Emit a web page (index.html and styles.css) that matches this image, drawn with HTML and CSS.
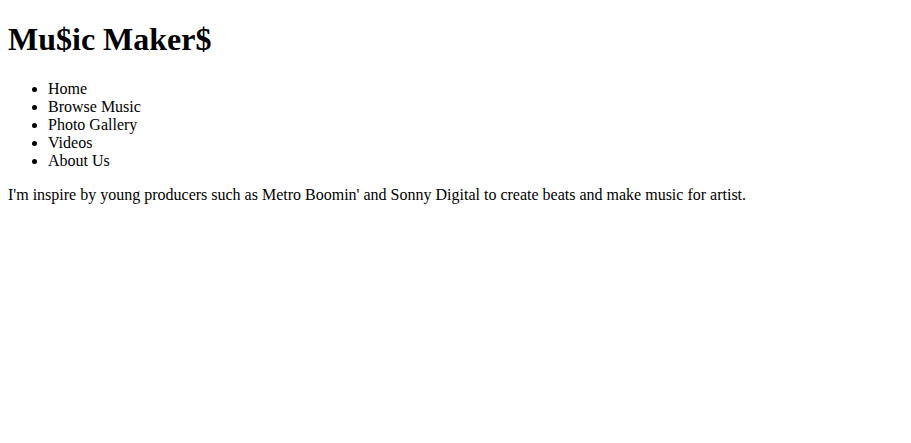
FILE: index.html
```html
<!DOCTYPE html>
<html>
<head>
<meta charset="utf-8">
<title>Mu$ic Maker$</title>
<link rel="stylesheet" href="styles.css">
</head>
<body class="page">
<h1 class="title">Mu$ic Maker$</h1>
<ul class="nav">
<li>Home</li>
<li>Browse Music</li>
<li>Photo Gallery</li>
<li>Videos</li>
<li>About Us</li>
</ul>
<p class="intro">I'm inspire by young producers such as Metro Boomin' and Sonny Digital to create beats and make music for artist.</p>
</body>
</html>
```
FILE: styles.css
```css
.page {
  font-family: "Liberation Serif", "Times New Roman", serif;
  font-size: 16px;
  color: #000;
  background: #fff;
}

.title {
  margin-top: 13.44px;
}
```
